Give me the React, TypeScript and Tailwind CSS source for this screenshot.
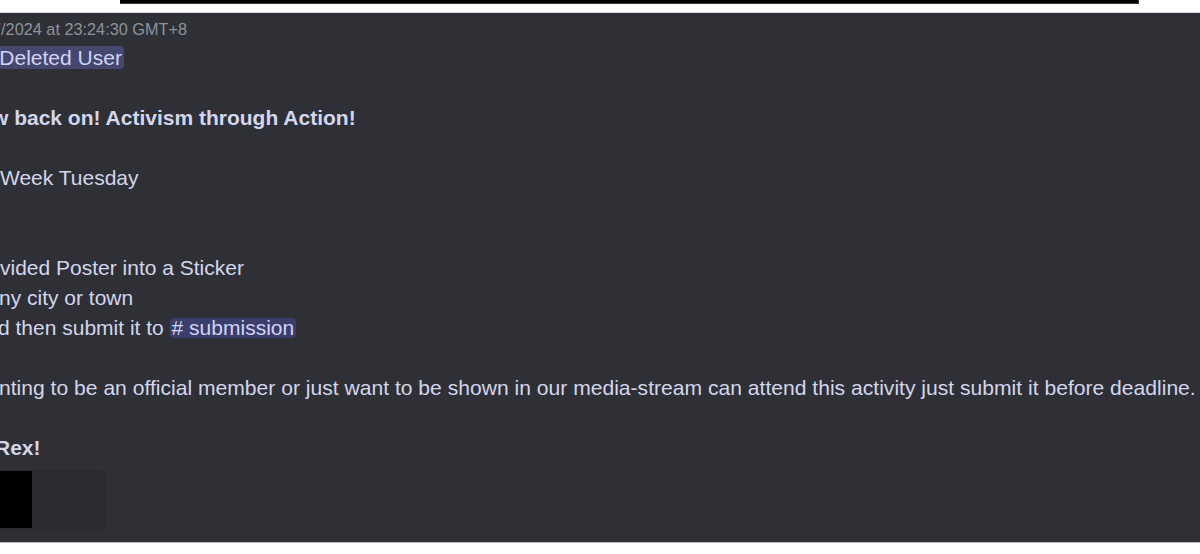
export default function App() {
  const font = { fontFamily: '"Liberation Sans", Arial, sans-serif' };
  return (
    <div className="flex h-[554px] w-[1200px] flex-col overflow-hidden bg-white" style={font}>
      {/* top strip with cropped black bar */}
      <div className="h-[12px] shrink-0 bg-white">
        <div className="ml-[120px] h-[4px] w-[1019px] border-r border-b border-[#3a3a3a] bg-black" />
      </div>
      <div className="h-px shrink-0 bg-[#d9d9d9]" />

      {/* message body */}
      <div className="h-[529px] shrink-0 overflow-hidden bg-[#2e3035] pt-[6px] text-[21px] leading-[30px] text-[#d3d6ee]">
        <div className="-ml-[8px] h-[20px] whitespace-nowrap text-[16.3px] leading-[20px] text-[#8e939b]">
          7/2024 at 23:24:30 GMT+8
        </div>
        <div className="mt-[4px]">
          <div className="whitespace-nowrap">
            <span className="-ml-[24px] inline-block rounded-[4px] bg-[#45476f] px-[2px] leading-[23px] text-[#d0d4f8]">
              @Deleted User
            </span>
          </div>
          <div className="h-[30px]" />
          <div className="-ml-[8px] whitespace-nowrap font-bold">w back on! Activism through Action!</div>
          <div className="h-[30px]" />
          <div className="whitespace-nowrap">Week Tuesday</div>
          <div className="h-[30px]" />
          <div className="h-[30px]" />
          <div className="whitespace-nowrap">vided Poster into a Sticker</div>
          <div className="-ml-[1px] whitespace-nowrap">ny city or town</div>
          <div className="-ml-[2px] whitespace-nowrap">
            d then submit it to{" "}
            <span className="inline-block rounded-[4px] bg-[#3b3e6b] px-[2px] leading-[20px] text-[#d0d4f8]">
              # submission
            </span>
          </div>
          <div className="h-[30px]" />
          <div className="-ml-[1px] whitespace-nowrap text-[21.1px]">
            nting to be an official member or just want to be shown in our media-stream can attend this activity just
            submit it before deadline.
          </div>
          <div className="h-[30px]" />
          <div className="-ml-[5px] whitespace-nowrap font-bold">Rex!</div>
        </div>

        {/* cropped embed */}
        <div className="mt-[7px] flex h-[63px] w-[107px] items-start rounded-r-[8px] bg-[#2a2c30] pt-px">
          <div className="h-[57px] w-[32px] bg-black" />
        </div>
      </div>

      <div className="h-px shrink-0 bg-[#bdbdbd]" />
      <div className="flex-1 bg-white" />
    </div>
  );
}
